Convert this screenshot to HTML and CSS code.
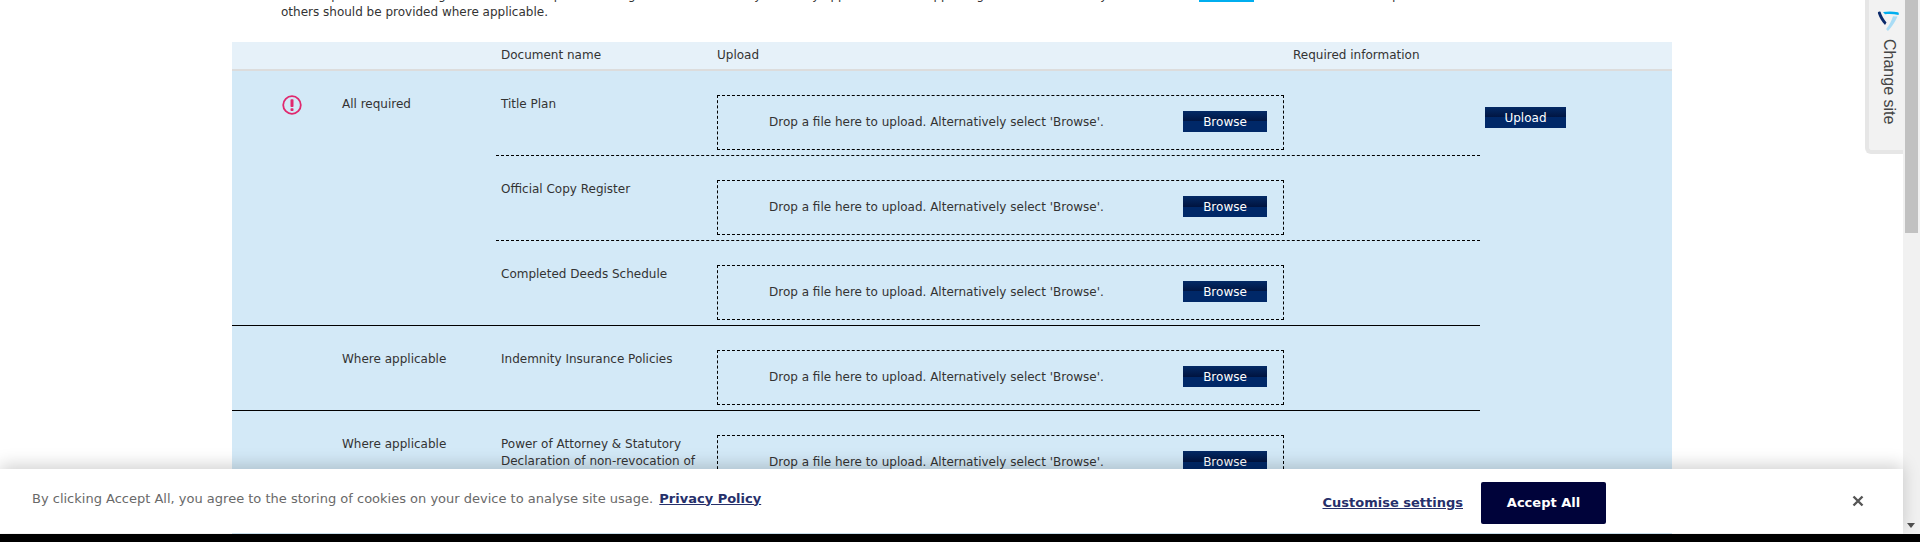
FILE: index.html
```html
<!DOCTYPE html>
<html lang="en">
<head>
    <meta charset="UTF-8">
    <meta name="viewport" content="width=device-width, initial-scale=1.0">
    <title>Upload documents</title>
    <link rel="stylesheet" href="styles.css">
</head>
<body>
    <div class="page">
        <main class="content">
            <p class="intro">Please upload the following documents. Title plans and registers are mandatory for every application and supporting documents are fully set out in our <a class="intro-link" href="#">guidance</a>. Some of these are required for all cases, and<br>others should be provided where applicable.</p>

            <div class="doc-table">
                <div class="head-row">
                    <div class="head-spacer"></div>
                    <div class="col-name">Document name</div>
                    <div class="col-upload">Upload</div>
                    <div class="col-info">Required information</div>
                </div>

                <div class="table-body">
                    <div class="groups">
                        <section class="group">
                            <div class="col-icon">
                                <svg class="alert-icon" viewBox="0 0 20 20" width="20" height="20">
                                    <circle cx="10" cy="10" r="8.800" fill="none" stroke="#e0286e" stroke-width="1.800"/>
                                    <rect x="8.500" y="4.300" width="3" height="7.700" rx="0.800" fill="#e0286e"/>
                                    <rect x="8.500" y="13.300" width="3" height="2.800" rx="0.800" fill="#e0286e"/>
                                </svg>
                            </div>
                            <div class="col-req">All required</div>
                            <div class="docs">
                                <div class="doc-row">
                                    <div class="doc-name">Title Plan</div>
                                    <div class="drop-zone"><span>Drop a file here to upload. Alternatively select 'Browse'.</span><button class="btn browse">Browse</button></div>
                                </div>
                                <div class="doc-row">
                                    <div class="doc-name">Official Copy Register</div>
                                    <div class="drop-zone"><span>Drop a file here to upload. Alternatively select 'Browse'.</span><button class="btn browse">Browse</button></div>
                                </div>
                                <div class="doc-row">
                                    <div class="doc-name">Completed Deeds Schedule</div>
                                    <div class="drop-zone"><span>Drop a file here to upload. Alternatively select 'Browse'.</span><button class="btn browse">Browse</button></div>
                                </div>
                            </div>
                        </section>

                        <section class="group">
                            <div class="col-icon"></div>
                            <div class="col-req">Where applicable</div>
                            <div class="docs">
                                <div class="doc-row">
                                    <div class="doc-name">Indemnity Insurance Policies</div>
                                    <div class="drop-zone"><span>Drop a file here to upload. Alternatively select 'Browse'.</span><button class="btn browse">Browse</button></div>
                                </div>
                            </div>
                        </section>

                        <section class="group">
                            <div class="col-icon"></div>
                            <div class="col-req">Where applicable</div>
                            <div class="docs">
                                <div class="doc-row tall-row">
                                    <div class="doc-name">Power of Attorney &amp; Statutory Declaration of non-revocation of Power of Attorney</div>
                                    <div class="drop-zone"><span>Drop a file here to upload. Alternatively select 'Browse'.</span><button class="btn browse">Browse</button></div>
                                </div>
                            </div>
                        </section>
                    </div>
                    <div class="upload-col">
                        <button class="btn upload">Upload</button>
                    </div>
                </div>
            </div>
        </main>

        <aside class="site-tab">
            <svg class="site-logo" viewBox="0 0 22 20" width="22" height="20">
                <path d="M1 2.500 C0.500 1 2 0.200 3.500 0.800 C4.500 4 6.500 8 9.500 11.500 L8 14 C5 11 2.500 7 1 2.500 Z" fill="#0b2a6b"/>
                <path d="M6 1 C10.500 0.200 16 0.200 21 1.200 C22 1.500 22 3 21.500 4 C17 2.800 12 2.800 8 3.200 Z" fill="#00aeef"/>
                <path d="M20.500 5.500 C18.500 10 15.500 15 11.500 19.500 C10.500 20 9.500 19 9.200 18 C12 14.500 14.500 10 16 5.200 Z" fill="#a9dcf5"/>
            </svg>
            <span class="site-tab-text">Change site</span>
        </aside>

        <div class="scrollbar">
            <div class="scroll-thumb"></div>
            <div class="scroll-arrow"></div>
        </div>

        <div class="cookie-bar">
            <p class="cookie-text">By clicking Accept All, you agree to the storing of cookies on your device to analyse site usage. <a href="#">Privacy Policy</a></p>
            <a class="cookie-settings" href="#">Customise settings</a>
            <button class="cookie-accept">Accept All</button>
            <button class="cookie-close" aria-label="Close">
                <svg viewBox="0 0 12 12" width="12" height="12"><path d="M1.500 1.500 L10.500 10.500 M10.500 1.500 L1.500 10.500" stroke="#565656" stroke-width="2.400"/></svg>
            </button>
        </div>
        <div class="black-strip"></div>
    </div>
</body>
</html>
```

FILE: styles.css
```css
/* General Styling */
html, body {
    margin: 0;
    height: 100%;
    overflow: hidden;
}

body {
    font-family: Tahoma, 'DejaVu Sans', Verdana, sans-serif;
    font-size: 12px;
    color: #333;
    background: #fff;
}

.page {
    position: relative;
    height: 542px;
    overflow: hidden;
}

.content {
    margin-top: -13px;
    padding-left: 232px;
    width: 1440px;
}

.intro {
    margin: 0 0 21px;
    padding: 0 0 0 49px;
    line-height: 17px;
    color: #333;
}

.intro-link {
    margin-left: 4px;
    background: #00aeef;
    color: #00aeef;
    text-decoration: none;
}

/* Table */
.doc-table {
    width: 1440px;
}

.head-row {
    display: flex;
    height: 27px;
    line-height: 27px;
    background: #e6f1f9;
    border-bottom: 2px solid #dcdcdc;
}

.head-spacer { width: 269px; }
.col-name { width: 216px; }
.col-upload { width: 576px; }

.table-body {
    display: flex;
    background: #d3e9f7;
}

.groups {
    width: 1248px;
}

.group {
    display: flex;
    border-bottom: 1px solid #000;
}

.col-icon {
    width: 60px;
    margin-left: 50px;
    padding-top: 24px;
}

.col-req {
    width: 154px;
    padding-top: 25px;
    line-height: 17px;
}

.docs {
    flex: 1;
}

.doc-row {
    display: flex;
    height: 84px;
    padding-left: 5px;
    border-bottom: 1px dashed #000;
}

.doc-row:last-child {
    border-bottom: none;
}

.tall-row {
    height: 130px;
}

.doc-name {
    width: 216px;
    padding-top: 25px;
    line-height: 17px;
}

.drop-zone {
    display: flex;
    align-items: center;
    justify-content: space-between;
    box-sizing: border-box;
    width: 567px;
    height: 55px;
    margin-top: 24px;
    padding: 0 16px 2px 51px;
    border: 1px dashed #000;
}

.btn {
    background: linear-gradient(to bottom, #042a66 0, #001440 50%, #002868 50%, #002868 100%);
    color: #fff;
    border: none;
    font-family: inherit;
    font-size: 12px;
    padding: 0;
    height: 21px;
}

.browse { width: 84px; }

.upload-col {
    padding: 36px 0 0 5px;
}

.upload { width: 81px; }

/* Site tab */
.site-tab {
    position: absolute;
    top: -10px;
    right: 17px;
    width: 38px;
    height: 164px;
    box-sizing: border-box;
    background: #f2f2f2;
    border: 4px solid #e6e6e6;
    border-right: none;
    border-top: none;
    border-radius: 0 0 0 6px;
    display: flex;
    flex-direction: column;
    align-items: flex-start;
    padding: 21px 0 0 8px;
}

.site-logo {
    flex-shrink: 0;
}

.site-tab-text {
    writing-mode: vertical-rl;
    font-family: 'Liberation Sans', Arial, sans-serif;
    font-size: 16px;
    color: #444;
    margin: 8px 0 0 3px;
}

/* Scrollbar */
.scrollbar {
    position: absolute;
    top: 0;
    right: 0;
    bottom: 0;
    width: 17px;
    background: #f1f1f1;
}

.scroll-thumb {
    margin: 0 auto;
    width: 13px;
    height: 233px;
    background: #c1c1c1;
}

.scroll-arrow {
    position: absolute;
    left: 4px;
    top: 523px;
    border-left: 4px solid transparent;
    border-right: 4px solid transparent;
    border-top: 5px solid #505050;
}

/* Cookie banner */
.cookie-bar {
    position: absolute;
    left: 0;
    right: 17px;
    bottom: 9px;
    height: 64px;
    background: #fff;
    box-shadow: 0 -4px 16px rgba(0, 0, 0, 0.18);
    display: flex;
    align-items: center;
    padding-left: 32px;
}

.cookie-text {
    margin: 0 0 6px;
    flex: 1;
    font-size: 13px;
    color: #696969;
}

.cookie-text a {
    color: #26306b;
    font-weight: bold;
    margin-left: 2px;
}

.cookie-settings {
    margin-top: 2px;
    color: #26306b;
    font-size: 13px;
    font-weight: bold;
}

.cookie-accept {
    margin: 4px 0 0 18px;
    padding-bottom: 2px;
    width: 125px;
    height: 42px;
    background: #00033a;
    color: #fff;
    font-family: inherit;
    font-size: 13px;
    font-weight: bold;
    border: none;
    border-radius: 2px;
}

.cookie-close {
    margin: 2px 38px 0 245px;
    padding: 0;
    background: none;
    border: none;
    width: 14px;
    height: 14px;
}

.black-strip {
    position: absolute;
    left: 0;
    right: 0;
    bottom: 0;
    height: 8px;
    background: #000;
}
```
